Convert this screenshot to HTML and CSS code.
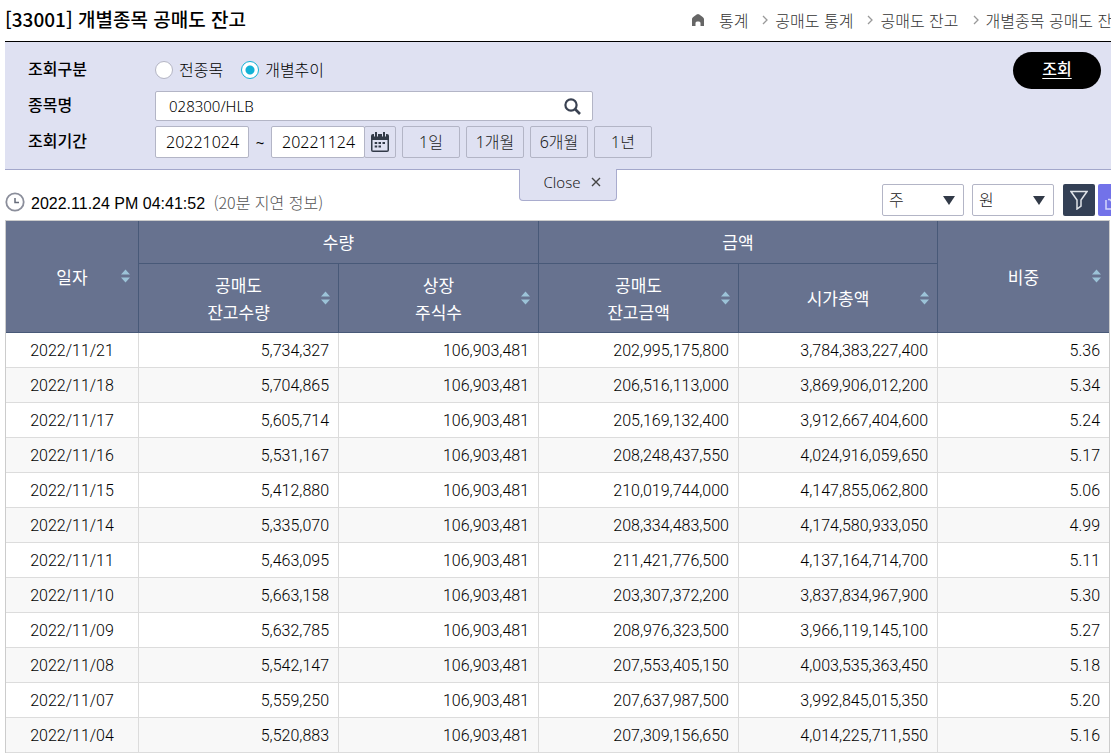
FILE: index.html
```html
<!DOCTYPE html>
<html lang="ko">
<head>
<meta charset="utf-8">
<meta name="viewport" content="width=device-width, initial-scale=1">
<title>[33001] 개별종목 공매도 잔고</title>
<link rel="stylesheet" href="styles.css">
</head>
<body>
<svg class="defs" aria-hidden="true">
  <symbol id="sort" viewBox="0 0 9 14"><path d="M4.500 0.500 9 5.500H0zM0 8.500h9L4.500 13.500z" fill="#9cc3d8"/></symbol>
  <symbol id="chev" viewBox="0 0 6 10"><path d="M1 1l4 4-4 4" fill="none" stroke="#999" stroke-width="1.300"/></symbol>
</svg>
<div class="page">
  <header class="head">
    <h1 class="title">[33001] 개별종목 공매도 잔고</h1>
    <nav class="crumbs" aria-label="위치">
      <svg class="home" viewBox="0 0 14 13"><path d="M7 0C8 0 13 3.500 13 5v7H9.500V9a1.500 1.500 0 0 0-1.500-1.500H6A1.500 1.500 0 0 0 4.500 9v3H1V5C1 3.500 6 0 7 0z" fill="#666"/></svg>
      <span class="crumb">통계</span>
      <svg class="chev"><use href="#chev"/></svg>
      <span class="crumb">공매도 통계</span>
      <svg class="chev"><use href="#chev"/></svg>
      <span class="crumb">공매도 잔고</span>
      <svg class="chev"><use href="#chev"/></svg>
      <span class="crumb">개별종목 공매도 잔고</span>
    </nav>
  </header>

  <form class="search">
    <div class="row">
      <span class="label" id="kind">조회구분</span>
      <div class="radios" role="radiogroup" aria-labelledby="kind">
        <label class="choice"><input class="radio" type="radio" name="kind">전종목</label>
        <label class="choice"><input class="radio" type="radio" name="kind" checked>개별추이</label>
      </div>
    </div>
    <div class="row row-name">
      <label class="label" for="item">종목명</label>
      <div class="item-box">
        <input class="item" id="item" type="text" value="028300/HLB">
        <button class="find" type="button" aria-label="종목 검색"><svg class="find-icon" viewBox="0 0 17 17"><circle cx="7" cy="7" r="5.600" fill="none" stroke="#3a4252" stroke-width="2.200"/><path d="M11 11l5 5" stroke="#3a4252" stroke-width="2.600"/></svg></button>
      </div>
    </div>
    <div class="row">
      <label class="label" for="from">조회기간</label>
      <input class="date" id="from" type="text" value="20221024">
      <span class="tilde">~</span>
      <input class="date" type="text" value="20221124" aria-label="종료일">
      <button class="cal" type="button" aria-label="달력"><svg class="cal-icon" viewBox="0 0 18 20"><path d="M2 2h14a2 2 0 0 1 2 2v14a2 2 0 0 1-2 2H2a2 2 0 0 1-2-2V4a2 2 0 0 1 2-2z" fill="#323a48"/><path d="M1.500 8h15v10.500h-15z" fill="#dfe1f2"/><path d="M4 0h2v4H4zM12 0h2v4h-2z" fill="#323a48"/><path d="M3 2v2.500h1V2zM6 2v2.500h1V2zM11 2v2.500h1V2zM14 2v2.500h1V2z" fill="#dfe1f2"/><path d="M7.500 10h2.500v2H7.500zM11.500 10H14v2h-2.500zM3.700 10h2.500v2H3.700zM3.700 13.500h2.500v2H3.700zM7.500 13.500h2.500v2H7.500z" fill="#323a48"/></svg></button>
      <div class="terms">
        <button class="term" type="button">1일</button>
        <button class="term" type="button">1개월</button>
        <button class="term" type="button">6개월</button>
        <button class="term" type="button">1년</button>
      </div>
    </div>
    <button class="submit" type="button">조회</button>
    <button class="close" type="button">Close <svg class="close-icon" viewBox="0 0 10 10"><path d="M1 1l8 8M9 1L1 9" stroke="#444" stroke-width="1.400"/></svg></button>
  </form>

  <div class="tools">
    <svg class="clock" viewBox="0 0 20 20"><circle cx="10" cy="10" r="8.700" fill="#fff" stroke="#8b8e9b" stroke-width="1.800"/><path d="M10 6v4.500h4" fill="none" stroke="#666b7a" stroke-width="1.500"/></svg>
    <p class="time">2022.11.24 PM 04:41:52 <span class="delay">(20분 지연 정보)</span></p>
    <span class="pick"><select class="unit" aria-label="수량 단위"><option>주</option></select></span>
    <span class="pick pick-last"><select class="unit" aria-label="금액 단위"><option>원</option></select></span>
    <button class="tool" type="button" aria-label="필터"><svg class="tool-icon" viewBox="0 0 18 20"><path d="M1 1.500h16l-6 8.500v6l-4 3v-9z" fill="none" stroke="#dfe3e8" stroke-width="1.500"/></svg></button>
    <button class="tool tool-save" type="button" aria-label="다운로드"><svg class="tool-icon" viewBox="0 0 18 20"><path d="M1 10v9h16v-9M9 3v11M3 9.500h2L9 14l4-4.500h2" fill="none" stroke="#d5d6fb" stroke-width="1.500"/></svg></button>
  </div>

  <div class="grid">
  <table class="table">
    <colgroup><col class="c-date"><col class="c-num"><col class="c-num"><col class="c-num"><col class="c-cap"><col></colgroup>
    <thead>
      <tr class="h-top">
        <th rowspan="2"><div class="th">일자<svg class="sort"><use href="#sort"/></svg></div></th>
        <th colspan="2">수량</th>
        <th colspan="2">금액</th>
        <th rowspan="2"><div class="th">비중<svg class="sort"><use href="#sort"/></svg></div></th>
      </tr>
      <tr class="h-sub">
        <th><div class="th">공매도<br>잔고수량<svg class="sort"><use href="#sort"/></svg></div></th>
        <th><div class="th">상장<br>주식수<svg class="sort"><use href="#sort"/></svg></div></th>
        <th><div class="th">공매도<br>잔고금액<svg class="sort"><use href="#sort"/></svg></div></th>
        <th><div class="th">시가총액<svg class="sort"><use href="#sort"/></svg></div></th>
      </tr>
    </thead>
    <tbody>
      <tr><td>2022/11/21</td><td>5,734,327</td><td>106,903,481</td><td>202,995,175,800</td><td>3,784,383,227,400</td><td>5.36</td></tr>
      <tr><td>2022/11/18</td><td>5,704,865</td><td>106,903,481</td><td>206,516,113,000</td><td>3,869,906,012,200</td><td>5.34</td></tr>
      <tr><td>2022/11/17</td><td>5,605,714</td><td>106,903,481</td><td>205,169,132,400</td><td>3,912,667,404,600</td><td>5.24</td></tr>
      <tr><td>2022/11/16</td><td>5,531,167</td><td>106,903,481</td><td>208,248,437,550</td><td>4,024,916,059,650</td><td>5.17</td></tr>
      <tr><td>2022/11/15</td><td>5,412,880</td><td>106,903,481</td><td>210,019,744,000</td><td>4,147,855,062,800</td><td>5.06</td></tr>
      <tr><td>2022/11/14</td><td>5,335,070</td><td>106,903,481</td><td>208,334,483,500</td><td>4,174,580,933,050</td><td>4.99</td></tr>
      <tr><td>2022/11/11</td><td>5,463,095</td><td>106,903,481</td><td>211,421,776,500</td><td>4,137,164,714,700</td><td>5.11</td></tr>
      <tr><td>2022/11/10</td><td>5,663,158</td><td>106,903,481</td><td>203,307,372,200</td><td>3,837,834,967,900</td><td>5.30</td></tr>
      <tr><td>2022/11/09</td><td>5,632,785</td><td>106,903,481</td><td>208,976,323,500</td><td>3,966,119,145,100</td><td>5.27</td></tr>
      <tr><td>2022/11/08</td><td>5,542,147</td><td>106,903,481</td><td>207,553,405,150</td><td>4,003,535,363,450</td><td>5.18</td></tr>
      <tr><td>2022/11/07</td><td>5,559,250</td><td>106,903,481</td><td>207,637,987,500</td><td>3,992,845,015,350</td><td>5.20</td></tr>
      <tr><td>2022/11/04</td><td>5,520,883</td><td>106,903,481</td><td>207,309,156,650</td><td>4,014,225,711,550</td><td>5.16</td></tr>
    </tbody>
  </table>
  </div>
</div>
</body>
</html>
```
FILE: styles.css
```css
* { box-sizing: border-box; }
body {
  margin: 0;
  overflow: hidden;
  background: #fff;
  color: #000;
  font: 16px/24px "Noto Sans", "Noto Sans CJK KR", sans-serif;
}
button, input, select { margin: 0; font: inherit; color: inherit; }
svg { display: block; flex: none; }
.defs { display: none; }
.page { padding-left: 5px; }
.head, .search, .tools { margin-right: -20px; }

.head {
  display: flex;
  align-items: center;
  justify-content: space-between;
  height: 42px;
  padding-bottom: 1px;
  border-bottom: 1px solid #000;
}
.title { margin: 0; padding-bottom: 3px; font-size: 19px; font-weight: 500; font-family: "Noto Sans CJK KR", sans-serif; }
.crumbs {
  display: flex;
  align-items: center;
  padding-right: 4px;
  color: #333;
  font: 300 16px/24px "Noto Sans CJK KR", sans-serif;
  white-space: nowrap;
}
.home { width: 14px; height: 13px; margin-right: 14px; }
.chev { width: 6px; height: 10px; margin: 0 7px 0 14px; }

.search {
  position: relative;
  display: flex;
  flex-direction: column;
  gap: 5px;
  padding: 12px 0 11px 23px;
  background: #dfe1f2;
  border-bottom: 1px solid #a3a7cb;
}
.row { display: flex; align-items: center; height: 32px; }
.row-name { height: 30px; }
.label { width: 127px; padding-bottom: 4px; font: 500 16px/24px "Noto Sans CJK KR", sans-serif; }
.radios { display: flex; gap: 18px; }
.choice { display: flex; align-items: center; gap: 6px; font-weight: 300; color: #000; }
.radio {
  appearance: none;
  width: 18px;
  height: 18px;
  border: 1px solid #b4b5c4;
  border-radius: 50%;
  background: #fff;
}
.radio:checked {
  border-color: #12b2d6;
  background: radial-gradient(circle, #12b2d6 0 4px, #fff 5px);
}
.item-box, .date, .cal, .term, .unit {
  border: 1px solid #b3b5c6;
  border-radius: 2px;
}
.item-box { display: flex; width: 438px; height: 30px; background: #fff; }
.item { flex: 1; min-width: 0; padding: 0 13px; border: 0; background: none; font-size: 15px; font-weight: 300; }
.find { padding: 0 11px; border: 0; background: none; }
.find-icon { width: 17px; height: 17px; }
.date { width: 94px; height: 32px; padding: 0 0 0 10px; background: #fff; font-weight: 300; }
.tilde { width: 22px; text-align: center; font-size: 15px; }
.cal { display: flex; align-items: center; justify-content: center; width: 32px; height: 32px; margin-left: -1px; padding: 0; background: none; }
.cal-icon { width: 18px; height: 20px; }
.terms { display: flex; gap: 6px; margin-left: 6px; }
.term { width: 58px; height: 32px; padding: 0; background: none; color: #222; font-weight: 300; }
.submit {
  position: absolute;
  top: 10px;
  right: 30px;
  width: 88px;
  height: 37px;
  padding: 0 0 4px;
  border: 0;
  border-radius: 19px;
  background: #000;
  color: #fff;
  font-weight: 500;
  text-decoration: underline;
  text-underline-offset: 3px;
}
.close {
  position: absolute;
  top: 100%;
  left: 50%;
  display: flex;
  align-items: center;
  justify-content: center;
  gap: 10px;
  width: 98px;
  height: 32px;
  margin-left: -49px;
  padding: 0 0 6px 8px;
  border: 1px solid #a9acce;
  border-top: 0;
  border-radius: 0 0 4px 4px;
  background: #dfe1f2;
  color: #222;
  font-size: 15px;
  font-weight: 300;
}
.close-icon { width: 10px; height: 10px; }

.tools { display: flex; align-items: center; height: 50px; padding: 10px 1px 0 0; }
.clock { width: 20px; height: 20px; margin-top: 3px; }
.time { flex: 1; margin: 0; padding: 6px 0 0 6px; font: 16px/24px "Liberation Sans", "Noto Sans CJK KR", sans-serif; }
.delay { margin-left: 4px; color: #555; font: 300 16px/24px "Noto Sans CJK KR", sans-serif; }
.pick { position: relative; margin-right: 8px; }
.pick-last { margin-right: 9px; }
.pick::after {
  content: "";
  position: absolute;
  top: 12px;
  right: 9px;
  border: 6px solid transparent;
  border-top: 9px solid #323a48;
  border-bottom: 0;
  pointer-events: none;
}
.unit { appearance: none; display: block; width: 82px; height: 32px; padding: 0 6px; background: #fff; color: #222; font-weight: 300; }
.tool { display: flex; align-items: center; justify-content: center; width: 32px; height: 32px; padding: 0; border: 0; border-radius: 2px; background: #334055; }
.tool-save { margin-left: 3px; background: #7272e9; }
.tool-icon { width: 18px; height: 20px; }

.grid { border: 1px solid #ccc; border-width: 1px 1px 0; margin-right: 1px; }
.table { width: 100%; table-layout: fixed; border-collapse: separate; border-spacing: 0; }
.c-date { width: 133px; }
.c-num { width: 200px; }
.c-cap { width: 199px; }
th, td { padding: 0; border: solid #dcdcdc; border-width: 0 1px 1px 0; }
tr > :last-child { border-right-width: 0; }
th { padding-bottom: 1px; border-color: #485978; background: #67728f; color: #fff; font: 400 17px/27px "Noto Sans CJK KR", sans-serif; }
.h-top { height: 43px; }
.h-sub { height: 69px; }
.h-sub > :last-child { border-right-width: 1px; }
.th { position: relative; }
.sort { position: absolute; top: 50%; right: 8px; width: 9px; height: 14px; margin-top: -7px; }
td { height: 35px; padding: 1px 9px 0 0; font: 300 16px/33px Roboto, sans-serif; text-align: right; }
td:first-child { padding-right: 0; text-align: center; }
tbody tr:nth-child(even) { background: #f8f8f8; }
```
